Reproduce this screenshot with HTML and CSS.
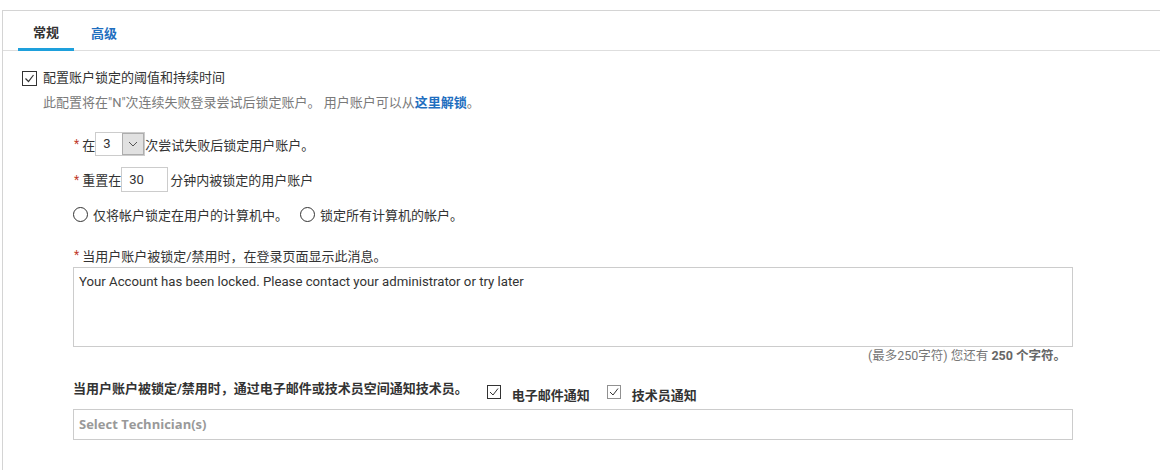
FILE: index.html
```html
<!DOCTYPE html>
<html lang="zh-CN">
<head>
<meta charset="utf-8">
<title>账户锁定</title>
<link rel="stylesheet" href="styles.css">
</head>
<body>
<div class="panel">
  <div class="tabs">
    <div class="tab active">常规</div>
    <div class="tab link">高级</div>
  </div>
  <div class="content">
    <div class="row-check">
      <svg class="cb" width="15" height="15" viewBox="0 0 15 15"><rect x="0.5" y="0.5" width="14" height="14" fill="#fff" stroke="#333"/><polyline points="3.5,7.5 6.5,10.5 11.5,4" fill="none" stroke="#333" stroke-width="1.2"/></svg>
      <span class="check-label">配置账户锁定的阈值和持续时间</span>
    </div>
    <div class="desc">此配置将在"N"次连续失败登录尝试后锁定账户。 用户账户可以从<a class="blue">这里解锁</a>。</div>

    <div class="form">
      <div class="field row-select">
        <span class="req">*</span><span>在</span>
        <div class="select"><span class="val">3</span><span class="btn"><svg width="10" height="6" viewBox="0 0 10 6"><polyline points="1,1 5,5 9,1" fill="none" stroke="#555" stroke-width="1"/></svg></span></div>
        <span>次尝试失败后锁定用户账户。</span>
      </div>
      <div class="field row-input">
        <span class="req">*</span><span>重置在</span>
        <div class="num">30</div>
        <span class="after">分钟内被锁定的用户账户</span>
      </div>
      <div class="field row-radio">
        <span class="radio"></span><span class="rlabel">仅将帐户锁定在用户的计算机中。</span>
        <span class="radio r2"></span><span class="rlabel">锁定所有计算机的帐户。</span>
      </div>
      <div class="field row-label">
        <span class="req">*</span><span>当用户账户被锁定/禁用时，在登录页面显示此消息。</span>
      </div>
      <div class="textarea">Your Account has been locked. Please contact your administrator or try later</div>
      <div class="counter">(最多250字符) 您还有 <b>250 个字符。</b></div>
      <div class="notify">
        <span class="nlabel">当用户账户被锁定/禁用时，通过电子邮件或技术员空间通知技术员。</span>
        <svg class="ncb first" width="14" height="14" viewBox="0 0 14 14"><rect x="0.5" y="0.5" width="13" height="13" fill="#fff" stroke="#333"/><polyline points="3,7 6,10 11,3.5" fill="none" stroke="#333" stroke-width="1"/></svg>
        <span class="ntext">电子邮件通知</span>
        <svg class="ncb second" width="14" height="14" viewBox="0 0 14 14"><rect x="0.5" y="0.5" width="13" height="13" fill="#fff" stroke="#222" stroke-dasharray="1,1"/><polyline points="3,7 6,10 11,3.5" fill="none" stroke="#333" stroke-width="1"/></svg>
        <span class="ntext">技术员通知</span>
      </div>
      <div class="tech">Select Technician(s)</div>
    </div>
  </div>
</div>
</body>
</html>
```
FILE: styles.css
```css
html, body {
  margin: 0;
  background: #fff;
}
body {
  font-family: Roboto, "Noto Sans CJK SC", sans-serif;
  font-size: 13px;
  color: #333;
}
.panel {
  margin: 10px 0 0 2px;
  border-top: 1px solid #d4d4d4;
  border-left: 1px solid #d4d4d4;
  height: 460px;
  box-sizing: border-box;
}
.tabs {
  display: flex;
  padding-left: 15px;
  height: 39px;
  border-bottom: 1px solid #dedede;
}
.tab {
  height: 40px;
  box-sizing: border-box;
  display: flex;
  align-items: center;
  justify-content: center;
  padding-top: 3px;
  font-weight: bold;
  font-size: 13px;
}
.tab.active {
  width: 56px;
  color: #333;
  border-bottom: 3px solid #1ea0dc;
}
.tab.link {
  width: 60px;
  color: #1f6fbf;
}
.content {
  padding-left: 19px;
}
.row-check {
  margin-top: 19px;
  height: 16px;
  display: flex;
  align-items: center;
}
.cb {
  flex: none;
}
.check-label {
  margin-left: 6px;
  line-height: 16px;
}
.desc {
  margin-top: 7px;
  padding-left: 21px;
  line-height: 20px;
  color: #7a7a7a;
}
.blue {
  color: #1f6fbf;
  font-weight: bold;
}
.form {
  padding-left: 51px;
}
.field {
  display: flex;
  align-items: center;
}
.req {
  color: #c0392b;
  font-size: 12px;
  margin-right: 3px;
  margin-left: 1px;
}
.row-select {
  margin-top: 19px;
  height: 24px;
}
.select {
  display: flex;
  width: 50px;
  height: 24px;
  border: 1px solid #ccc;
  box-sizing: border-box;
  background: #fff;
}
.select .val {
  flex: 1;
  padding-left: 7px;
  line-height: 22px;
}
.select .btn {
  width: 22px;
  background: #e1e1e1;
  border: 1px solid #adadad;
  box-sizing: border-box;
  display: flex;
  align-items: center;
  justify-content: center;
}
.row-input {
  margin-top: 11px;
  height: 25px;
}
.num {
  width: 47px;
  height: 25px;
  box-sizing: border-box;
  border: 1px solid #ccc;
  padding-left: 7px;
  line-height: 23px;
}
.after {
  margin-left: 2px;
}
.row-radio {
  margin-top: 14px;
  height: 16px;
}
.radio {
  width: 15px;
  height: 15px;
  box-sizing: border-box;
  border: 1px solid #333;
  border-radius: 50%;
  flex: none;
}
.rlabel {
  margin-left: 5px;
}
.radio.r2 {
  margin-left: 12px;
}
.row-label {
  margin-top: 23px;
  height: 20px;
}
.textarea {
  margin-top: 2px;
  width: 1000px;
  height: 80px;
  box-sizing: border-box;
  border: 1px solid #ccc;
  padding: 6px 5px;
  line-height: 16px;
  font-size: 13.2px;
}
.counter {
  margin-top: 1px;
  width: 1000px;
  box-sizing: border-box;
  padding-right: 7px;
  text-align: right;
  line-height: 16px;
  font-size: 12.5px;
  color: #777;
}
.counter b {
  color: #666;
}
.notify {
  margin-top: 15px;
  display: flex;
  align-items: flex-start;
  height: 27px;
}
.nlabel {
  font-weight: bold;
  line-height: 20px;
}
.ncb {
  margin-top: 6px;
  flex: none;
}
.ncb.first {
  margin-left: 19px;
}
.ncb.second {
  margin-left: 17px;
}
.ntext {
  margin-top: 7px;
  margin-left: 11px;
  line-height: 20px;
  font-weight: bold;
}
.tech {
  margin-top: 3px;
  width: 1000px;
  height: 31px;
  box-sizing: border-box;
  border: 1px solid #ccc;
  padding-left: 5px;
  line-height: 29px;
  font-family: "Open Sans", sans-serif;
  font-weight: bold;
  font-size: 13px;
  color: #999;
}
```
